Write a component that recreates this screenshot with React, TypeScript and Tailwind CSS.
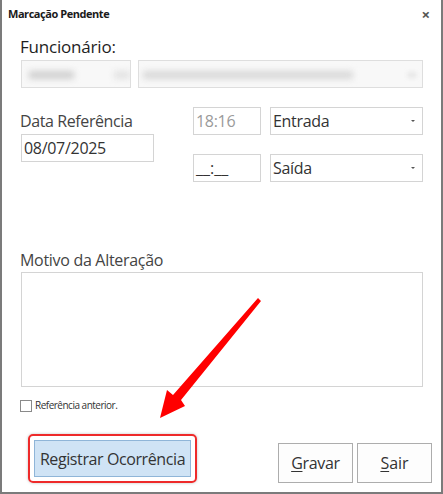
import React from "react";

const font = "font-['Segoe_UI','Open_Sans','Noto_Sans',sans-serif]";

function Caret() {
  return (
    <svg width="6" height="4" viewBox="0 0 6 4" className="mr-[6px]">
      <path d="M1 1 L3 3 L5 1 Z" fill="#555" />
    </svg>
  );
}

export default function App() {
  return (
    <div className={`relative w-[443px] h-[494px] bg-white border-x-2 border-b-2 border-[#7b7b7b] box-border ${font} text-[#333] overflow-hidden`}>
      {/* title bar */}
      <div className="h-[28px] flex items-center justify-between pl-[6px] pr-[11px]">
        <span className="text-[11px] font-bold text-[#1a1a1a] tracking-[-0.45px]">Marcação Pendente</span>
        <span className="text-[15px] font-bold text-[#555] leading-none">×</span>
      </div>

      <div className="pl-[18px] pr-[18px]">
        <div className="mt-[8px] text-[17px] leading-[22px] text-[#1e1e1e] tracking-[-0.2px]">Funcionário:</div>
        {/* blurred field */}
        <div className="mt-[2px] flex h-[28px] gap-[7px] ml-[1px]">
          <div className="relative w-[110px] h-full border border-[#dedede] bg-[#f8f8f8] overflow-hidden">
            <div className="absolute left-[7px] top-[10px] w-[45px] h-[8px] bg-[#cfcfcf] blur-[3px]" />
            <div className="absolute left-[92px] top-[10px] w-[16px] h-[8px] bg-[#e2e2e2] blur-[3px]" />
          </div>
          <div className="relative flex-1 h-full border border-[#dedede] bg-[#f8f8f8] overflow-hidden">
            <div className="absolute left-[4px] top-[10px] w-[210px] h-[8px] bg-[#d8d8d8] blur-[3px]" />
            <div className="absolute right-[6px] top-[11px] w-[8px] h-[6px] bg-[#e6e6e6] blur-[2px]" />
          </div>
        </div>

        {/* date / time area */}
        <div className="mt-[19px] flex">
          <div className="w-[174px] pt-[3px]">
            <div className="text-[16px] leading-[22px] text-[#444] tracking-[-0.4px]">Data Referência</div>
            <div className="mt-[2px] ml-[1px] w-[133px] h-[28px] border border-[#d4d4d4] flex items-center pl-[2px] text-[16px] text-[#333] tracking-[-0.3px]">08/07/2025</div>
          </div>
          <div className="flex flex-col gap-[19px]">
            <div className="flex gap-[9px]">
              <div className="w-[68px] h-[28px] border border-[#d4d4d4] flex items-center pl-[2px] text-[16px] text-[#9a9a9a] tracking-[-0.3px]">18:16</div>
              <div className="w-[153px] h-[28px] border border-[#d4d4d4] flex items-center justify-between pl-[2px] text-[16px] text-[#333] tracking-[-0.3px]">
                <span>Entrada</span>
                <Caret />
              </div>
            </div>
            <div className="flex gap-[9px]">
              <div className="w-[68px] h-[28px] border border-[#d4d4d4] flex items-center pl-[2px] text-[16px] text-[#333]">__:__</div>
              <div className="w-[153px] h-[28px] border border-[#d4d4d4] flex items-center justify-between pl-[2px] text-[16px] text-[#333] tracking-[-0.3px]">
                <span>Saída</span>
                <Caret />
              </div>
            </div>
          </div>
        </div>

        <div className="mt-[67px] text-[16px] leading-[22px] text-[#444] tracking-[-0.3px]">Motivo da Alteração</div>
        <div className="mt-[1px] ml-[1px] h-[115px] border border-[#d4d4d4]" />

        <div className="mt-[11px] flex items-center gap-[3px]">
          <div className="w-[12px] h-[12px] border border-[#8a8a8a] bg-white" />
          <span className="text-[10px] text-[#333] tracking-[-0.5px]">Referência anterior.</span>
        </div>

        <div className="mt-[21px] flex items-start justify-between">
          <div className="ml-[8px] p-[4px] rounded-[5px] border-2 border-[#ee2a2a] shadow-[0_0_3px_rgba(0,0,0,0.25)]">
            <div className="w-[157px] h-[37px] bg-[#cfe3f5] border border-[#8fb5d8] flex items-center justify-center text-[16px] text-[#333] tracking-[-0.4px]">
              Registrar Ocorrência
            </div>
          </div>
          <div className="flex gap-[4px] mr-[-9px] mt-[9px]">
            <div className="w-[75px] h-[40px] border border-[#adadad] bg-[#fdfdfd] flex items-center justify-center text-[16px] text-[#333] tracking-[-0.3px]">
              <span><span className="underline underline-offset-2">G</span>ravar</span>
            </div>
            <div className="w-[75px] h-[40px] border border-[#adadad] bg-[#fdfdfd] flex items-center justify-center text-[16px] text-[#333]">
              <span><span className="underline underline-offset-2">S</span>air</span>
            </div>
          </div>
        </div>
      </div>

      {/* red arrow annotation */}
      <svg className="absolute left-0 top-0 pointer-events-none" width="443" height="494" viewBox="0 0 443 494">
        <polygon
          points="258,298 261,301 181,400 185,406 160,418 167,390 173,395"
          fill="#ff0000"
          transform="translate(-2,0)"
        />
      </svg>
    </div>
  );
}
